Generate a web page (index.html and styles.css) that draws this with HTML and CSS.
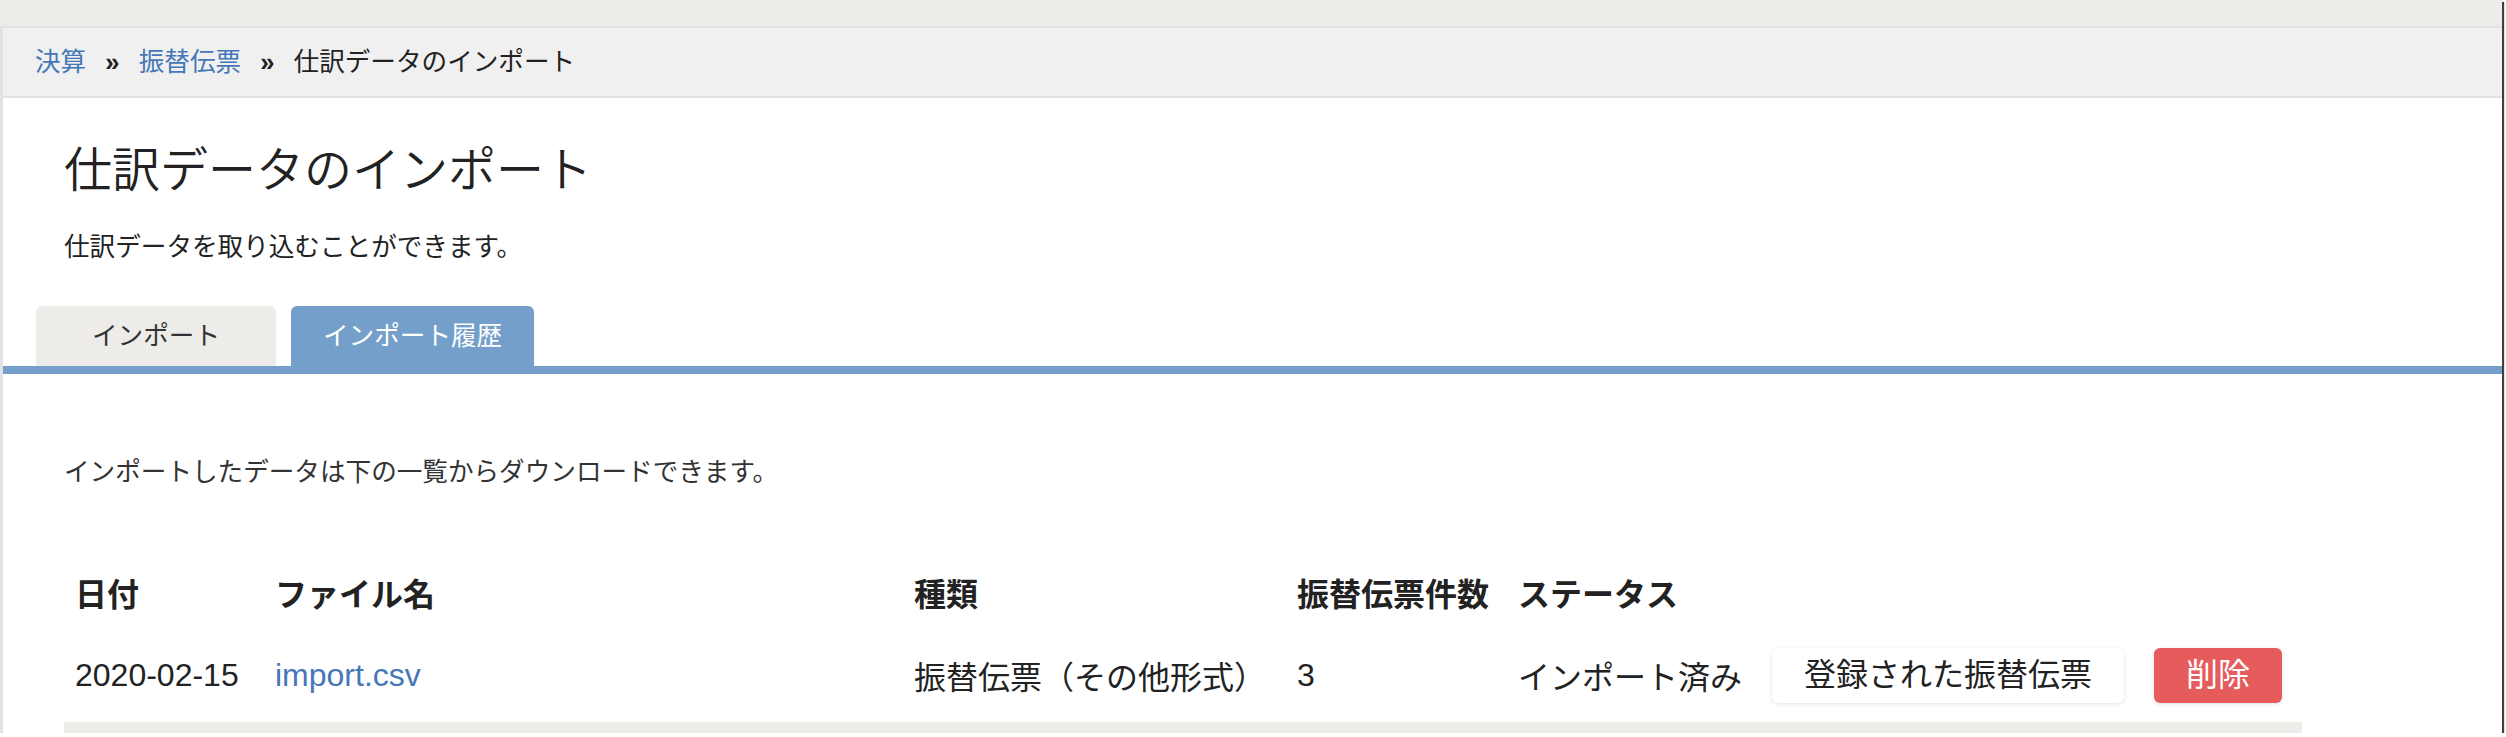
FILE: index.html
```html
<!DOCTYPE html>
<html lang="ja">
<head>
  <meta charset="UTF-8">
  <meta name="viewport" content="width=device-width, initial-scale=1.0">
  <title>仕訳データのインポート</title>
  <link rel="stylesheet" href="styles.css">
</head>
<body>

<div class="window">
  <div class="topbar"></div>

  <div class="panel">
    <nav class="breadcrumb">
      <a href="#">決算</a>
      <span class="sep">»</span>
      <a href="#">振替伝票</a>
      <span class="sep">»</span>
      <span class="current">仕訳データのインポート</span>
    </nav>

    <div class="page-head">
      <h1>仕訳データのインポート</h1>
      <p>仕訳データを取り込むことができます。</p>
    </div>

    <ul class="tabs">
      <li class="tab">インポート</li>
      <li class="tab active">インポート履歴</li>
    </ul>

    <div class="tab-body">
      <p class="note">インポートしたデータは下の一覧からダウンロードできます。</p>

      <table class="history">
        <colgroup>
          <col class="c-date">
          <col class="c-file">
          <col class="c-kind">
          <col class="c-count">
          <col class="c-status">
          <col class="c-link">
          <col class="c-del">
        </colgroup>
        <thead>
          <tr>
            <th>日付</th>
            <th>ファイル名</th>
            <th>種類</th>
            <th>振替伝票件数</th>
            <th>ステータス</th>
            <th></th>
            <th></th>
          </tr>
        </thead>
        <tbody>
          <tr>
            <td>2020-02-15</td>
            <td><a href="#">import.csv</a></td>
            <td>振替伝票（その他形式）</td>
            <td>3</td>
            <td>インポート済み</td>
            <td><button class="btn">登録された振替伝票</button></td>
            <td><button class="btn danger">削除</button></td>
          </tr>
          <tr class="stripe">
            <td colspan="7"></td>
          </tr>
        </tbody>
      </table>
    </div>
  </div>
</div>

</body>
</html>
```

FILE: styles.css
```css
:root {
  --beige: #eeece8;
  --line: #e2e2e2;
  --link: #4677b8;
  --tab-blue: #749fca;
  --danger: #e65c5c;
  --text: #222222;
}
body {
  margin: 0;
  background: #ffffff;
  color: var(--text);
  font-family: "Liberation Sans", "Noto Sans CJK JP", sans-serif;
  overflow: hidden;
}
a {
  color: var(--link);
  text-decoration: none;
}
.window {
  width: 2502px;
  height: 733px;
  overflow: hidden;
  background: #ffffff;
  box-shadow: 2px 2px 1px rgba(0,0,0,0.75);
}
.topbar {
  height: 26px;
  background: var(--beige);
}
.panel {
  border-left: 3px solid var(--line);
}
.breadcrumb {
  background: #f0f0f0;
  border-top: 2px solid var(--line);
  border-bottom: 2px solid var(--line);
  padding: 15px 32px;
  font-size: 25.6px;
  line-height: 38px;
}
.breadcrumb .sep {
  display: inline-block;
  margin: 0 12px;
  font-weight: bold;
}
.page-head {
  padding: 44px 61px 0;
}
.page-head h1 {
  margin: 0;
  font-size: 48px;
  line-height: 58px;
  font-weight: 350;
}
.page-head p {
  margin: 28px 0 0;
  font-size: 25.6px;
  line-height: 38px;
}
.tabs {
  list-style: none;
  margin: 40px 0 0;
  padding: 0 0 0 33px;
  display: flex;
  gap: 15px;
  border-bottom: 8px solid var(--tab-blue);
}
.tab {
  min-width: 176px;
  padding: 0 32px;
  height: 60px;
  line-height: 60px;
  text-align: center;
  font-size: 25.6px;
  background: var(--beige);
  color: #333333;
  border-radius: 6px 6px 0 0;
}
.tab.active {
  background: var(--tab-blue);
  color: #ffffff;
}
.tab-body {
  padding: 0 0 0 61px;
}
.note {
  margin: 79px 0 0;
  font-size: 25.6px;
  line-height: 38px;
  color: #333333;
}
.history {
  margin-top: 65px;
  width: 2238px;
  table-layout: fixed;
  border-collapse: collapse;
  font-size: 32px;
}
.c-date { width: 200px; }
.c-file { width: 639px; }
.c-kind { width: 383px; }
.c-count { width: 221px; }
.c-status { width: 254px; }
.c-link { width: 382px; }
.c-del { width: 159px; }
.history th {
  height: 72px;
  padding: 0 0 0 11px;
  text-align: left;
  vertical-align: middle;
  font-weight: bold;
  white-space: nowrap;
}
.history td {
  height: 94px;
  padding: 0 0 0 11px;
  vertical-align: middle;
  white-space: nowrap;
}
.history .stripe td {
  background: var(--beige);
}
.btn {
  font-family: inherit;
  font-size: 32px;
  line-height: 39px;
  padding: 8px 32px;
  border: none;
  border-radius: 6px;
  background: #ffffff;
  color: var(--text);
  box-shadow: 0 1px 4px rgba(0,0,0,0.12);
  cursor: pointer;
}
.btn.danger {
  background: var(--danger);
  color: #ffffff;
}
```
